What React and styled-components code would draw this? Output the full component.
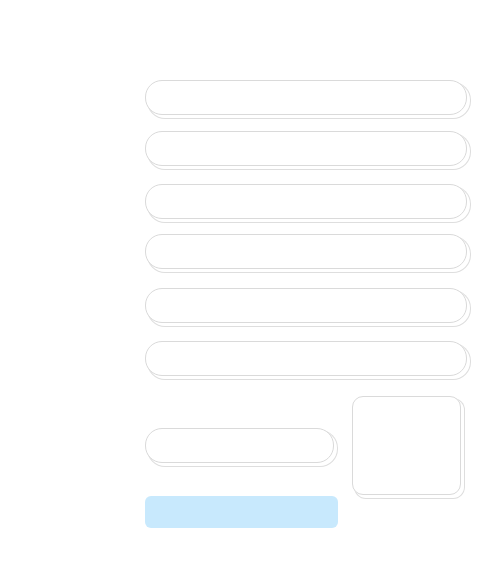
import React from "react";
import styled, { createGlobalStyle } from "styled-components";

const Global = createGlobalStyle`
  html, body { margin: 0; padding: 0; background: #fff; }
  body { font-family: "Liberation Sans", Arial, sans-serif; }
`;

const Page = styled.div`
  width: 491px;
  height: 561px;
  box-sizing: border-box;
  padding: 80px 0 0 145px;
`;

const Form = styled.form`
  display: flex;
  flex-direction: column;
  width: 322px;
`;

const Field = styled.input`
  display: block;
  box-sizing: border-box;
  width: ${(p) => p.$w || "322px"};
  height: 35px;
  margin: ${(p) => p.$mt || 0}px 0 0 0;
  padding: 0 14px;
  border: 1px solid #dadada;
  border-radius: 17px;
  background: #fff;
  box-shadow: 3px 3px 0 0 #fff, 3px 3px 0 1px #dedede;
  outline: none;
  font: 14px "Liberation Sans", Arial, sans-serif;
`;

const BottomRow = styled.div`
  display: flex;
  align-items: flex-start;
  margin-top: 20px;
  gap: 14px;
`;

const LeftCol = styled.div`
  display: flex;
  flex-direction: column;
  width: 193px;
  padding-top: 32px;
`;

const Submit = styled.button`
  width: 193px;
  height: 32px;
  margin-top: 33px;
  border: none;
  border-radius: 6px;
  background: #c8e9fd;
  padding: 0;
  cursor: pointer;
`;

const Area = styled.textarea`
  box-sizing: border-box;
  width: 109px;
  height: 99px;
  border: 1px solid #dadada;
  border-radius: 11px;
  background: #fff;
  box-shadow: 3px 3px 0 0 #fff, 3px 3px 0 1px #dedede;
  resize: none;
  outline: none;
  padding: 8px;
  font: 14px "Liberation Sans", Arial, sans-serif;
`;

export default function App() {
  return (
    <>
      <Global />
      <Page>
        <Form onSubmit={(e) => e.preventDefault()}>
          <Field $mt={0} />
          <Field $mt={16} />
          <Field $mt={18} />
          <Field $mt={15} />
          <Field $mt={19} />
          <Field $mt={18} />
          <BottomRow>
            <LeftCol>
              <Field $w="189px" />
              <Submit type="submit" />
            </LeftCol>
            <Area />
          </BottomRow>
        </Form>
      </Page>
    </>
  );
}
